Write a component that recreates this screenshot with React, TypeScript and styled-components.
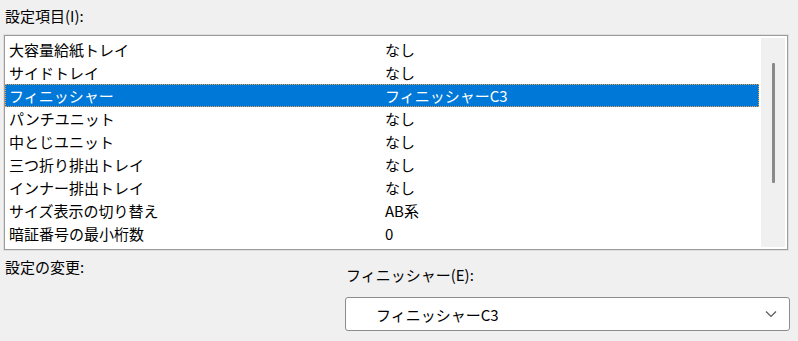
import styled, { createGlobalStyle } from 'styled-components';

const GlobalStyle = createGlobalStyle`
  body {
    margin: 0;
    background: #f0f0f0;
    font-family: "Noto Sans CJK JP", "Liberation Sans", sans-serif;
    color: #000;
  }
`;

const Page = styled.div`
  width: 798px;
  height: 341px;
  box-sizing: border-box;
  padding: 4px 10px 0 4px;
  background: #f0f0f0;
  overflow: hidden;
`;

const Label = styled.div<{ $top?: number }>`
  font-size: 15px;
  line-height: 23px;
  padding-left: 1px;
  margin-top: ${p => p.$top ?? 0}px;
`;

const ListFrame = styled.div`
  display: flex;
  height: 215px;
  margin-top: 8px;
  box-sizing: border-box;
  border: 1px solid #9c9c9c;
  box-shadow: 0 0 0 1px #dedede;
  background: #fff;
  padding: 2px 2px 2px 0;
`;

const Rows = styled.div`
  flex: 1;
  display: flex;
  flex-direction: column;
`;

const Row = styled.div<{ $selected?: boolean }>`
  display: grid;
  grid-template-columns: 376px 1fr;
  height: 23px;
  box-sizing: border-box;
  padding-left: 3px;
  font-size: 15px;
  line-height: 21px;
  background: ${p => (p.$selected ? '#0078d7' : 'transparent')};
  color: ${p => (p.$selected ? '#fff' : '#000')};
  border: 1px dotted ${p => (p.$selected ? '#f0a040' : 'transparent')};
  white-space: nowrap;
`;

const ScrollTrack = styled.div`
  width: 24px;
  margin-left: 2px;
  background: #f0f0f0;
  display: flex;
  justify-content: center;
  padding-top: 25px;
`;

const Thumb = styled.div`
  width: 3px;
  height: 120px;
  background: #8a8a8a;
  border-radius: 1px;
`;

const Bottom = styled.div`
  display: flex;
  justify-content: space-between;
  margin-top: 2px;
`;

const ChangeColumn = styled.div`
  width: 445px;
  display: flex;
  flex-direction: column;
  margin-right: -2px;
`;

const Select = styled.div`
  margin-top: 11px;
  height: 34px;
  box-sizing: border-box;
  border: 1px solid #8c8c8c;
  border-radius: 3px;
  background: #fff;
  display: flex;
  align-items: center;
  justify-content: space-between;
  padding: 0 12px 0 30px;
  font-size: 15px;
`;

const rows = [
  ['大容量給紙トレイ', 'なし'],
  ['サイドトレイ', 'なし'],
  ['フィニッシャー', 'フィニッシャーC3'],
  ['パンチユニット', 'なし'],
  ['中とじユニット', 'なし'],
  ['三つ折り排出トレイ', 'なし'],
  ['インナー排出トレイ', 'なし'],
  ['サイズ表示の切り替え', 'AB系'],
  ['暗証番号の最小桁数', '0'],
];

export default function App() {
  return (
    <Page>
      <GlobalStyle />
      <Label>設定項目(I):</Label>
      <ListFrame>
        <Rows>
          {rows.map(([name, value], i) => (
            <Row key={name} $selected={i === 2}>
              <span>{name}</span>
              <span>{value}</span>
            </Row>
          ))}
        </Rows>
        <ScrollTrack>
          <Thumb />
        </ScrollTrack>
      </ListFrame>
      <Bottom>
        <Label $top={3}>設定の変更:</Label>
        <ChangeColumn>
          <Label $top={11}>フィニッシャー(E):</Label>
          <Select>
            <span>フィニッシャーC3</span>
            <svg width="12" height="8" viewBox="0 0 12 8">
              <polyline points="1,1.5 6,6.5 11,1.5" fill="none" stroke="#5a5a5a" strokeWidth="1.2" />
            </svg>
          </Select>
        </ChangeColumn>
      </Bottom>
    </Page>
  );
}
